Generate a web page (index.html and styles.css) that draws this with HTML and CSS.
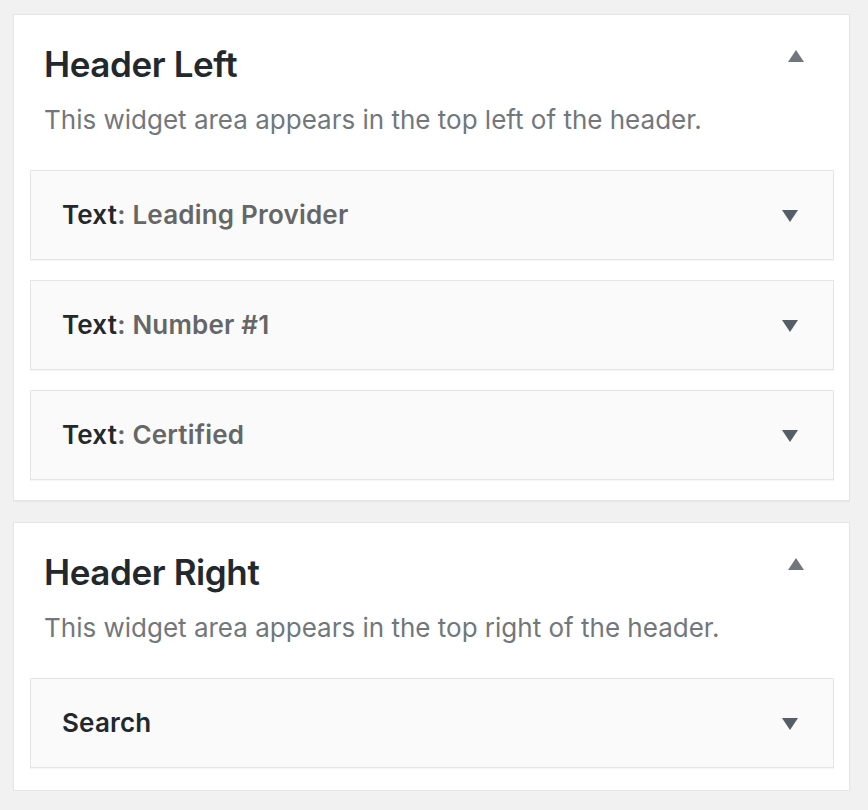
FILE: index.html
```html
<!DOCTYPE html>
<html lang="en">
<head>
<meta charset="utf-8">
<title>Widgets</title>
<link rel="stylesheet" href="styles.css">
</head>
<body>
<div class="areas">
  <section class="area area-first">
    <div class="area-head">
      <h2 class="area-title">Header Left</h2>
      <svg class="toggle-up" width="16" height="12" viewBox="0 0 16 12"><polygon points="0,12 16,12 8,0" fill="#72777c"/></svg>
    </div>
    <p class="area-desc">This widget area appears in the top left of the header.</p>
    <div class="widgets">
      <div class="widget">
        <h3 class="widget-title">Text<span class="in-title">: Leading Provider</span></h3>
        <svg class="toggle-down" width="16" height="12" viewBox="0 0 16 12"><polygon points="0,0 16,0 8,12" fill="#555d66"/></svg>
      </div>
      <div class="widget">
        <h3 class="widget-title">Text<span class="in-title">: Number #1</span></h3>
        <svg class="toggle-down" width="16" height="12" viewBox="0 0 16 12"><polygon points="0,0 16,0 8,12" fill="#555d66"/></svg>
      </div>
      <div class="widget">
        <h3 class="widget-title">Text<span class="in-title">: Certified</span></h3>
        <svg class="toggle-down" width="16" height="12" viewBox="0 0 16 12"><polygon points="0,0 16,0 8,12" fill="#555d66"/></svg>
      </div>
    </div>
  </section>
  <section class="area area-last">
    <div class="area-head">
      <h2 class="area-title">Header Right</h2>
      <svg class="toggle-up" width="16" height="12" viewBox="0 0 16 12"><polygon points="0,12 16,12 8,0" fill="#72777c"/></svg>
    </div>
    <p class="area-desc">This widget area appears in the top right of the header.</p>
    <div class="widgets">
      <div class="widget">
        <h3 class="widget-title">Search</h3>
        <svg class="toggle-down" width="16" height="12" viewBox="0 0 16 12"><polygon points="0,0 16,0 8,12" fill="#555d66"/></svg>
      </div>
    </div>
  </section>
</div>
</body>
</html>
```

FILE: styles.css
```css
* { box-sizing: border-box; }

html, body {
  margin: 0;
  background: #f1f1f1;
}

body {
  font-family: Inter, "Open Sans", "Liberation Sans", sans-serif;
  padding: 14px 18px 0 13px;
}

.areas {
  display: flex;
  flex-direction: column;
  gap: 21px;
}

.area {
  background: #fff;
  border: 1px solid #e5e5e5;
  box-shadow: 0 1px 1px rgba(0, 0, 0, 0.04);
  padding: 27px 15px 20px 16px;
}

.area-last {
  padding-bottom: 22px;
}

.area-head {
  display: flex;
  justify-content: space-between;
  align-items: flex-start;
  padding-left: 14px;
}

.area-title {
  margin: 0;
  font-size: 35px;
  line-height: 44px;
  font-weight: 600;
  letter-spacing: -0.4px;
  color: #23282d;
}

.toggle-up {
  display: block;
  margin-top: 8px;
  margin-right: 30px;
}

.area-desc {
  margin: 16px 0 32px 14px;
  font-size: 26px;
  line-height: 36px;
  color: #72777c;
}

.widgets {
  display: flex;
  flex-direction: column;
  gap: 20px;
}

.widget {
  display: flex;
  justify-content: space-between;
  align-items: center;
  background: #fafafa;
  border: 1px solid #e5e5e5;
  box-shadow: 0 1px 1px rgba(0, 0, 0, 0.04);
  padding: 26px 35px 26px 31px;
}

.widget-title {
  margin: 0;
  font-size: 26px;
  line-height: 36px;
  font-weight: 600;
  letter-spacing: 0.2px;
  color: #23282d;
}

.in-title {
  color: #666;
}

.toggle-down {
  display: block;
  margin-top: 2px;
}
```
